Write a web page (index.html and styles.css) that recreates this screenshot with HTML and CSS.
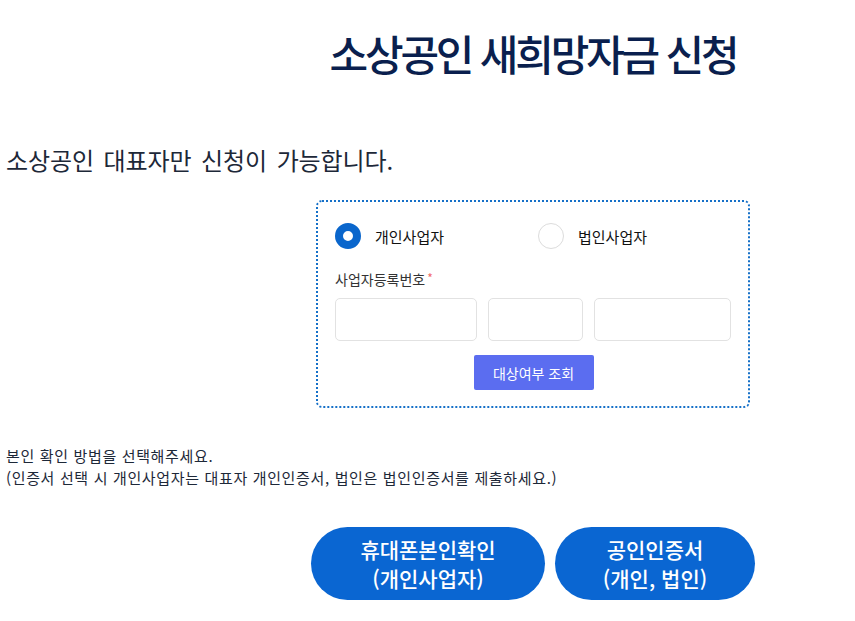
FILE: index.html
```html
<!DOCTYPE html>
<html lang="ko">
  <head>
    <meta charset="UTF-8">
    <title>소상공인 새희망자금 신청</title>
    <link rel="stylesheet" href="styles.css">
  </head>
  <body>
    <div class="page">
      <h1 class="title">소상공인 새희망자금 신청</h1>

      <p class="lead">소상공인 대표자만 신청이 가능합니다.</p>

      <div class="check-box">
        <div class="radio-row">
          <label class="radio">
            <span class="dot on"></span>
            <span>개인사업자</span>
          </label>
          <label class="radio">
            <span class="dot"></span>
            <span>법인사업자</span>
          </label>
        </div>

        <div class="field-label">사업자등록번호<span class="req">*</span></div>
        <div class="biz-no">
          <input type="text" class="no-1">
          <input type="text" class="no-2">
          <input type="text" class="no-3">
        </div>

        <div class="center">
          <button class="btn-check">대상여부 조회</button>
        </div>
      </div>

      <div class="notice">
        <p>본인 확인 방법을 선택해주세요.</p>
        <p>(인증서 선택 시 개인사업자는 대표자 개인인증서, 법인은 법인인증서를 제출하세요.)</p>
      </div>

      <div class="auth-buttons">
        <button class="btn-auth phone">휴대폰본인확인<br>(개인사업자)</button>
        <button class="btn-auth cert">공인인증서<br>(개인, 법인)</button>
      </div>
    </div>
  </body>
</html>
```

FILE: styles.css
```css
body {
margin: 0;
background: #fff;
font-family: "Noto Sans CJK KR", "Noto Sans", sans-serif;
color: #1d2838;
}

.page {
display: grid;
grid-template-columns: 305px 444px;
padding: 0 0 0 6px;
}

.title {
grid-column: 2;
margin: 23px 0 0;
text-align: center;
font-size: 42px;
font-weight: 500;
letter-spacing: -3.2px;
line-height: 60px;
color: #0a1f4e;
}

.lead {
grid-column: 1 / 3;
margin: 61px 0 0;
font-size: 24px;
font-weight: 400;
letter-spacing: -0.1px;
word-spacing: 3px;
line-height: 32px;
color: #1d2838;
}

.check-box {
grid-column: 2;
margin: 24px 5px 0;
padding: 21px 16px 16px 17px;
border: 2px dotted #1570c8;
border-radius: 6px;
}

.radio-row {
display: grid;
grid-template-columns: 203px 1fr;
}

.radio {
display: flex;
align-items: center;
gap: 14px;
font-size: 15px;
color: #111;
}

.dot {
width: 26px;
height: 26px;
border: 1px solid #dcdcdc;
border-radius: 50%;
box-sizing: border-box;
}

.dot.on {
border: 8px solid #0a66cc;
background: #fff;
}

.field-label {
margin-top: 20px;
font-size: 14px;
color: #333;
}

.req {
color: #f26b6b;
font-size: 12px;
margin-left: 2px;
vertical-align: top;
}

.biz-no {
display: flex;
gap: 11px;
margin-top: 9px;
}

.biz-no input {
height: 43px;
box-sizing: border-box;
border: 1px solid #e2e2e2;
border-radius: 5px;
padding: 0 8px;
font-size: 15px;
}

.no-1 { width: 142px; }
.no-2 { width: 95px; }
.no-3 { width: 137px; }

.center {
text-align: center;
margin-top: 14px;
}

.btn-check {
width: 120px;
height: 35px;
border: none;
border-radius: 2px;
background: #5b6df0;
color: #fff;
font-family: inherit;
font-size: 14px;
cursor: pointer;
}

.notice {
grid-column: 1 / 3;
margin-top: 37px;
font-size: 15px;
letter-spacing: 0.65px;
line-height: 22px;
color: #1d2838;
}

.notice p {
margin: 0;
}

.auth-buttons {
grid-column: 2;
display: flex;
justify-content: center;
gap: 10px;
margin-top: 38px;
}

.btn-auth {
flex-shrink: 0;
height: 73px;
padding: 0;
border: none;
border-radius: 37px;
background: #0a66d2;
color: #fff;
font-family: inherit;
font-size: 21px;
font-weight: 500;
line-height: 29px;
white-space: nowrap;
cursor: pointer;
}

.btn-auth.phone { width: 234px; }
.btn-auth.cert { width: 200px; }
```
